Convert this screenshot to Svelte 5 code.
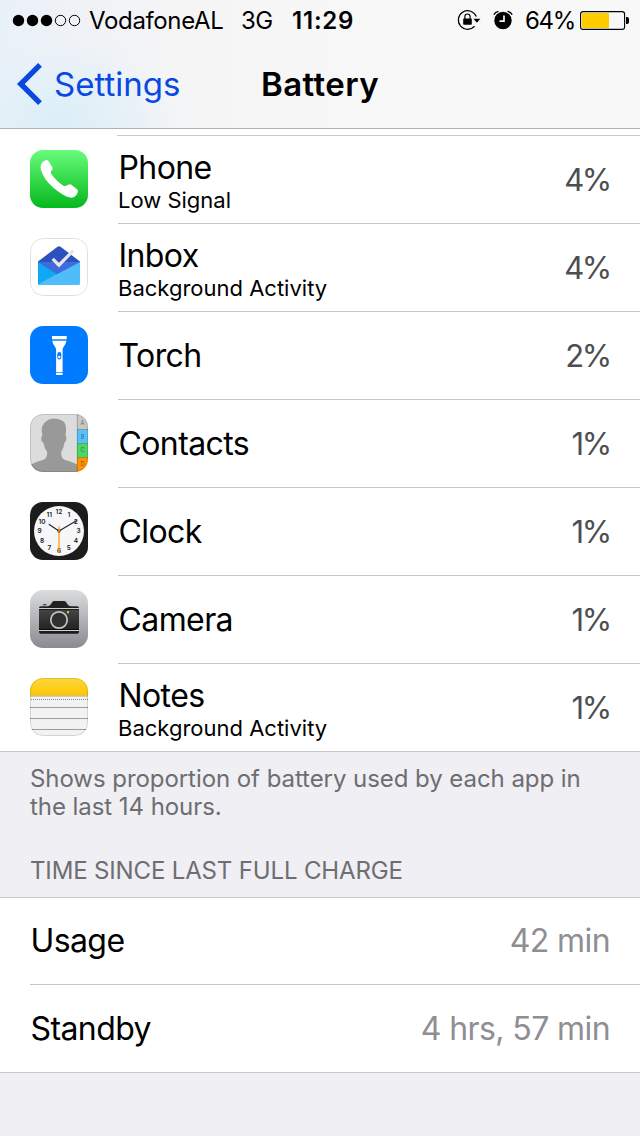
<script>
	const apps = [
		{ icon: "phone", name: "Phone", detail: "Low Signal", usage: 4 },
		{ icon: "inbox", name: "Inbox", detail: "Background Activity", usage: 4 },
		{ icon: "torch", name: "Torch", usage: 2 },
		{ icon: "contacts", name: "Contacts", usage: 1 },
		{ icon: "clock", name: "Clock", usage: 1 },
		{ icon: "camera", name: "Camera", usage: 1 },
		{ icon: "notes", name: "Notes", detail: "Background Activity", usage: 1 }
	];

	const times = [
		{ label: "Usage", value: "42 min" },
		{ label: "Standby", value: "4 hrs, 57 min" }
	];

	const signal = 3;
	const hours = [12, 1, 2, 3, 4, 5, 6, 7, 8, 9, 10, 11];
	const hourX = i => 29 + 19.5 * Math.sin(i * Math.PI / 6);
	const hourY = i => 31.4 - 19.5 * Math.cos(i * Math.PI / 6);
</script>

<main>
	<header>
		<div class="status">
			<svg class="signal" width="70" height="14" viewBox="0 0 70 14">
				{#each [0, 1, 2, 3, 4] as i}
					<circle cx={6.5 + i * 14} cy="7.5" r={i < signal ? 5.7 : 5.2} fill={i < signal ? "#000" : "none"} stroke={i < signal ? "none" : "#000"} />
				{/each}
			</svg>
			<span class="carrier">VodafoneAL</span>
			<span class="network">3G</span>
			<span class="time">11:29</span>
			<span class="spacer"></span>
			<svg class="lock" width="24" height="22" viewBox="0 0 24 22">
				<path d="M19.3 7.6A9.3 9.3 0 1 0 17.6 17.2" fill="none" stroke="#000" stroke-width="1.2" />
				<path d="M16.4 9.7h7l-3.500 4z" />
				<rect x="6.200" y="9.600" width="8.600" height="6.200" rx=".8" />
				<path d="M7.900 10V7.600a2.600 2.600 0 0 1 5.200 0V10" fill="none" stroke="#000" stroke-width="1.200" />
			</svg>
			<svg class="alarm" width="20" height="20" viewBox="0 0 20 20">
				<circle cx="10" cy="10.500" r="8.700" />
				<path d="M.8 4.800Q2.200 2 5.500 1.400M14.500 1.400Q17.800 2 19.200 4.800" fill="none" stroke="#000" stroke-width="1.400" />
				<path d="M11 5.400v5.800H6.500" fill="none" stroke="#f7f7f7" stroke-width="1.700" />
			</svg>
			<span class="percent">64%</span>
			<svg class="battery" width="50" height="20" viewBox="0 0 50 20">
				<rect x=".6" y="1.600" width="44" height="17.800" rx="2.500" fill="none" stroke="#000" stroke-width="1.100" />
				<rect x="2" y="3" width="27" height="15" rx="1" fill="#fc0" />
				<path d="M46 7h1q2 0 2 2v3q0 2-2 2h-1z" />
			</svg>
		</div>
		<nav>
			<a class="back" href="#settings">
				<svg width="28" height="44" viewBox="0 0 28 44"><path d="M25 2.800L5.800 22 25 41.200" fill="none" stroke="#0a48e0" stroke-width="5.400" /></svg>
				<span>Settings</span>
			</a>
			<h1>Battery</h1>
			<span></span>
		</nav>
	</header>

	<div class="previous"></div>
	<section class="apps">
		{#each apps as app}
			<div class="app">
				<svg class="icon" width="58" height="58" viewBox="0 0 58 58">
					{#if app.icon === "phone"}
						<defs>
							<linearGradient id="green" x2="0" y2="1"><stop stop-color="#68fc7c" /><stop offset="1" stop-color="#04b81c" /></linearGradient>
						</defs>
						<rect width="58" height="58" fill="url(#green)" />
						<path d="M11 14.4Q13.5 10.4 16.4 10q1.2-.1 2 1l4 6.2q.8 1.4-.4 2.800l-1 1.200q-.7 1.200.2 2.500 5.300 7.600 12.200 12 1.300.9 2.600.1l2.800-1.400q1.200-.5 2.200.2l6 4.600q1.400 1 .9 2.600-1.400 4.800-5 5.800-5 1-14.300-5.800Q17 33.600 12.800 24.500 9.600 17.500 11 14.400z" fill="#fff" />
					{:else if app.icon === "inbox"}
						<rect width="58" height="58" fill="#fff" />
						<path d="M8 23.500L27.500 8.700q1.500-1 3 0L50 23.500V36H8z" fill="#2b51bd" />
						<path d="M8 24h42L29 37z" fill="#3f6bdc" />
						<path d="M8 24l20 12.500L9 47H8z" fill="#11a7f4" />
						<path d="M50 24v21.500q0 1.500-1.500 1.500H9.500q-1.200 0-1.500-.8z" fill="#50bdf8" />
						<path d="M22.700 20.800l6.200 6.400 14.500-14.700" fill="none" stroke="#e6e6e6" stroke-width="3.200" />
						<rect class="edge" x=".5" y=".5" width="57" height="57" rx="12.500" />
					{:else if app.icon === "torch"}
						<rect width="58" height="58" fill="#007aff" />
						<path d="M22 10h14.700v3H22zM22.300 15h14q-.3 3-2.500 5.500-1.200 1.500-1.200 3.500v22h-6.500V24q0-2-1.200-3.500-2.300-2.500-2.600-5.500zM26.100 47h6.500v2h-6.500z" fill="#fff" />
						<path d="M22 13h14.700v2H22zM26.100 46h6.500v1h-6.500z" fill="#4ba0ff" />
						<rect x="27.300" y="26" width="4" height="7.500" rx="2" fill="#007aff" />
						<circle cx="29.300" cy="31" r="1.200" fill="#fff" />
					{:else if app.icon === "contacts"}
						<rect width="58" height="58" fill="#dcdcdc" />
						<path d="M0 58v-7q6-3.300 13.500-5.200 3.800-1.300 3.700-7.800-2.700-3.200-3.800-9.200-2.500-1-2-5.300 0-1.500 1-1.800-2.400-11 3.800-14.500Q20 4 25.500 4.700 31 5 34 8q3.200 4.500 1.500 13.800 1.300.4.900 3-.4 3.400-1.900 4-.9 5.800-3.400 9.200-.2 6.400 3.400 7.800 6.700 1.600 12.500 4.500V58z" fill="#999" />
						<rect x="47" width="11" height="15.500" fill="#c8c7c2" />
						<rect x="47" y="15.500" width="11" height="14" fill="#5ac0fa" />
						<rect x="47" y="29.500" width="11" height="14" fill="#4bd763" />
						<rect x="47" y="43.500" width="11" height="15" fill="#ff9200" />
						<path d="M47 15.500h11M47 29.500h11M47 43.500h11M47.300 0v58" stroke="#000" stroke-opacity=".22" />
						{#each ["A", "B", "C", "D"] as letter, i}
							<text class="tab" x="52.500" y={11.200 + i * 13.500}>{letter}</text>
						{/each}
						<rect class="edge" x=".5" y=".5" width="57" height="57" rx="12.500" />
					{:else if app.icon === "clock"}
						<rect width="58" height="58" fill="#1c1c1c" />
						<circle cx="29" cy="29" r="25" fill="#f7f7fa" />
						{#each hours as hour, i}
							<text class="hour" x={hourX(i)} y={hourY(i)}>{hour}</text>
						{/each}
						<path d="M29 29L18.800 22.300M29 29L46.800 18.500" stroke="#222" stroke-width="1.100" />
						<path d="M29 24.500V51" stroke="#ff9500" stroke-width="1.200" />
						<circle cx="29" cy="29" r="1.600" fill="#222" />
						<circle cx="29" cy="29" r="1" fill="#ff9500" />
					{:else if app.icon === "camera"}
						<defs>
							<linearGradient id="silver" x2="0" y2="1"><stop stop-color="#dbdcdd" /><stop offset="1" stop-color="#898b91" /></linearGradient>
							<linearGradient id="body" x2="0" y2="1"><stop stop-color="#444" /><stop offset="1" stop-color="#222" /></linearGradient>
						</defs>
						<rect width="58" height="58" fill="url(#silver)" />
						<path d="M13 14.300h3.500v1H13zM9 18q0-1.800 1.800-1.800h6.700q2 0 3.200-1.800l1.300-2q.8-1.300 2.300-1.300h9.600q1.500 0 2.400 1.300l1.400 2q1.100 1.800 3 1.800h6.500Q49 16.200 49 18z" fill="#222" />
						<rect x="9" y="20" width="40" height="19.700" fill="url(#body)" />
						<path d="M9 18.500h40M9 40.500h40" stroke="#e4e9e7" stroke-width="1" />
						<path d="M9 19.400h40M9 39.600h40" stroke="#050505" />
						<path d="M9 41h40v1q0 1.800-1.800 1.800H10.800Q9 43.800 9 42z" fill="#1d1d1d" />
						<circle cx="29" cy="30" r="8.200" fill="#303030" stroke="#c2c4c8" stroke-width="1.700" />
						<rect x="37" y="21.200" width="2" height="2" fill="#fc0" />
					{:else}
						<defs>
							<linearGradient id="yellow" x2="0" y2="1"><stop stop-color="#fed840" /><stop offset="1" stop-color="#fdc600" /></linearGradient>
						</defs>
						<rect width="58" height="58" fill="#f2f2f2" />
						<rect width="58" height="17.500" fill="url(#yellow)" />
						<path d="M0 18h58" stroke="#b9a671" />
						<path d="M1 21.500h57" stroke="#888" stroke-dasharray="1 1" />
						<path d="M0 29.500h58M0 40.500h58M0 51.500h58" stroke="#9d9d9d" />
						<rect class="edge" x=".5" y=".5" width="57" height="57" rx="12.500" />
					{/if}
				</svg>
				<div class="line">
					<div class="names">
						<div class="name">{app.name}</div>
						{#if app.detail}
							<div class="detail">{app.detail}</div>
						{/if}
					</div>
					<div class="usage">{app.usage}%</div>
				</div>
			</div>
		{/each}
	</section>

	<p class="note">Shows proportion of battery used by each app in the last 14 hours.</p>
	<h2>TIME SINCE LAST FULL CHARGE</h2>

	<section class="times">
		{#each times as item}
			<div class="item">
				<span class="name">{item.label}</span>
				<span class="value">{item.value}</span>
			</div>
		{/each}
	</section>
</main>

<style>
	:global(body) {
		margin: 0;
		background: #efeff4;
	}

	main {
		width: 640px;
		height: 1136px;
		overflow: hidden;
		background: #efeff4;
		color: #000;
		font-family: Inter, "Liberation Sans", sans-serif;
	}

	header {
		box-sizing: border-box;
		height: 129px;
		border-bottom: 1px solid #b2b2b2;
		background:
			radial-gradient(ellipse 150px 110px at 60px 125px, #dceef6 0%, rgba(224, 240, 248, 0.7) 40%, rgba(236, 243, 248, 0.25) 75%, rgba(245, 245, 246, 0) 100%),
			linear-gradient(90deg, #e9f1f9 0, #f0f2f6 80px, #f5f5f6 180px, #f8f8f8 400px);
	}

	.status {
		display: flex;
		align-items: center;
		height: 40px;
		padding: 0 10px 0 12px;
		font-size: 24px;
		line-height: 40px;
		white-space: nowrap;
	}
	.carrier, .network, .time, .percent {
		padding-top: 2px;
	}
	.carrier {
		width: 152px;
		margin-left: 7px;
		letter-spacing: -0.35px;
	}
	.network {
		width: 51px;
		letter-spacing: -0.5px;
	}
	.time {
		font-weight: 600;
		letter-spacing: 0.8px;
	}
	.spacer {
		flex: 1;
	}
	.alarm {
		margin-left: 12px;
	}
	.percent {
		width: 50px;
		margin: 0 5px 0 12px;
		letter-spacing: -1.3px;
	}

	nav {
		display: grid;
		grid-template-columns: 1fr auto 1fr;
		align-items: center;
		height: 88px;
	}
	.back {
		display: flex;
		align-items: center;
		gap: 12px;
		padding-left: 15px;
		color: #0a48e0;
		font-size: 33px;
		text-decoration: none;
	}
	.back span {
		margin-left: -1px;
	}
	h1 {
		margin: 0;
		font-size: 33px;
		font-weight: 600;
		letter-spacing: 0.4px;
	}

	.previous {
		height: 6px;
		border-bottom: 1px solid;
		border-image: linear-gradient(90deg, #fff 118px, #c8c7cc 118px) 1;
		background: #fff;
	}

	.apps {
		border-bottom: 1px solid #c8c7cc;
		background: #fff;
	}
	.app {
		display: flex;
		gap: 30px;
		height: 88px;
		padding-left: 30px;
	}
	.app:last-child {
		height: 87px;
	}
	.icon {
		flex: none;
		margin-top: 14px;
		border-radius: 13px;
	}
	.edge {
		fill: none;
		stroke: #000;
		stroke-opacity: 0.12;
	}
	.tab {
		fill: #000;
		fill-opacity: 0.5;
		font-size: 5.5px;
		text-anchor: middle;
	}
	.hour {
		fill: #222;
		font-size: 6.5px;
		font-weight: 600;
		text-anchor: middle;
	}
	.line {
		display: flex;
		flex: 1;
		align-items: center;
		justify-content: space-between;
		box-sizing: border-box;
		height: 88px;
		padding-right: 30px;
		border-bottom: 1px solid #c8c7cc;
	}
	.app:last-child .line {
		height: 87px;
		border-bottom: 0;
	}
	.name {
		padding-left: 0.5px;
		font-size: 32px;
		letter-spacing: -0.6px;
		line-height: 38px;
	}
	.detail {
		font-size: 22px;
		line-height: 28px;
	}
	.names:has(.detail) {
		padding-top: 3px;
	}
	.names:has(.detail) .detail {
		margin-top: -1px;
	}
	.usage {
		margin-top: -1px;
		color: #4d4d52;
		font-size: 31px;
		letter-spacing: -2.3px;
	}

	.note {
		margin: 0;
		padding: 13px 30px 0;
		color: #6d6d72;
		font-size: 24px;
		letter-spacing: -0.06px;
		line-height: 28px;
	}
	h2 {
		margin: 0;
		padding: 36px 30px 12px;
		color: #6d6d72;
		font-size: 24px;
		font-weight: 400;
		letter-spacing: -0.15px;
		line-height: 28px;
	}

	.times {
		padding-left: 30px;
		border-top: 1px solid #c8c7cc;
		border-bottom: 1px solid #c8c7cc;
		background: #fff;
	}
	.item {
		display: flex;
		align-items: center;
		justify-content: space-between;
		box-sizing: border-box;
		height: 87px;
		padding-right: 30px;
	}
	.item:first-child {
		border-bottom: 1px solid #c8c7cc;
	}
	.value {
		color: #8e8e93;
		font-size: 32px;
		letter-spacing: -0.6px;
		line-height: 38px;
	}
</style>
